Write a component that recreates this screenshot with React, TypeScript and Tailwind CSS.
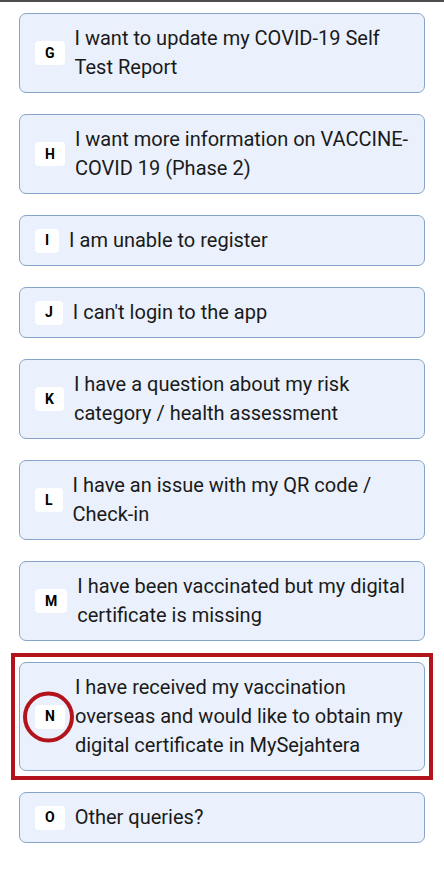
const items = [
  { letter: 'G', text: 'I want to update my COVID-19 Self Test Report' },
  { letter: 'H', text: 'I want more information on VACCINE-COVID 19 (Phase 2)' },
  { letter: 'I', text: 'I am unable to register' },
  { letter: 'J', text: "I can't login to the app" },
  { letter: 'K', text: 'I have a question about my risk category / health assessment' },
  { letter: 'L', text: 'I have an issue with my QR code / Check-in' },
  { letter: 'M', text: 'I have been vaccinated but my digital certificate is missing' },
  {
    letter: 'N',
    text: 'I have received my vaccination overseas and would like to obtain my digital certificate in MySejahtera',
    marked: true,
  },
  { letter: 'O', text: 'Other queries?' },
];

function Option({ letter, text, marked }: { letter: string; text: string; marked?: boolean }) {
  return (
    <div className="relative flex items-center gap-[10px] rounded-[7px] border border-[#86a4c9] bg-[#eaf1fc] py-[10px] pl-[15px] pr-[12px]">
      <span className="flex h-[24px] min-w-[23px] shrink-0 items-center justify-center rounded-[4px] bg-white px-[10px] text-[14px] font-bold text-black">
        {letter}
      </span>
      <span className="text-[20px] leading-[29px] text-[#1a1a1a]">{text}</span>
      {marked && (
        <span className="absolute left-[3px] top-1/2 h-[51px] w-[51px] -translate-y-1/2 rounded-full border-[4px] border-[#b3141c]" />
      )}
    </div>
  );
}

export default function App() {
  return (
    <main className="min-h-[870px] bg-white" style={{ fontFamily: 'Roboto, "Liberation Sans", sans-serif' }}>
      <div className="h-[2px] bg-[#4d4d4d]" />
      <div className="flex flex-col gap-[21px] px-[19px] pt-[11px]">
        {items.map((item) =>
          item.marked ? (
            <div key={item.letter} className="-mx-[8px] -my-[9px] border-4 border-[#b3141c] px-[4px] pt-[5px] pb-[5px]">
              <Option {...item} />
            </div>
          ) : (
            <Option key={item.letter} {...item} />
          )
        )}
      </div>
    </main>
  );
}
